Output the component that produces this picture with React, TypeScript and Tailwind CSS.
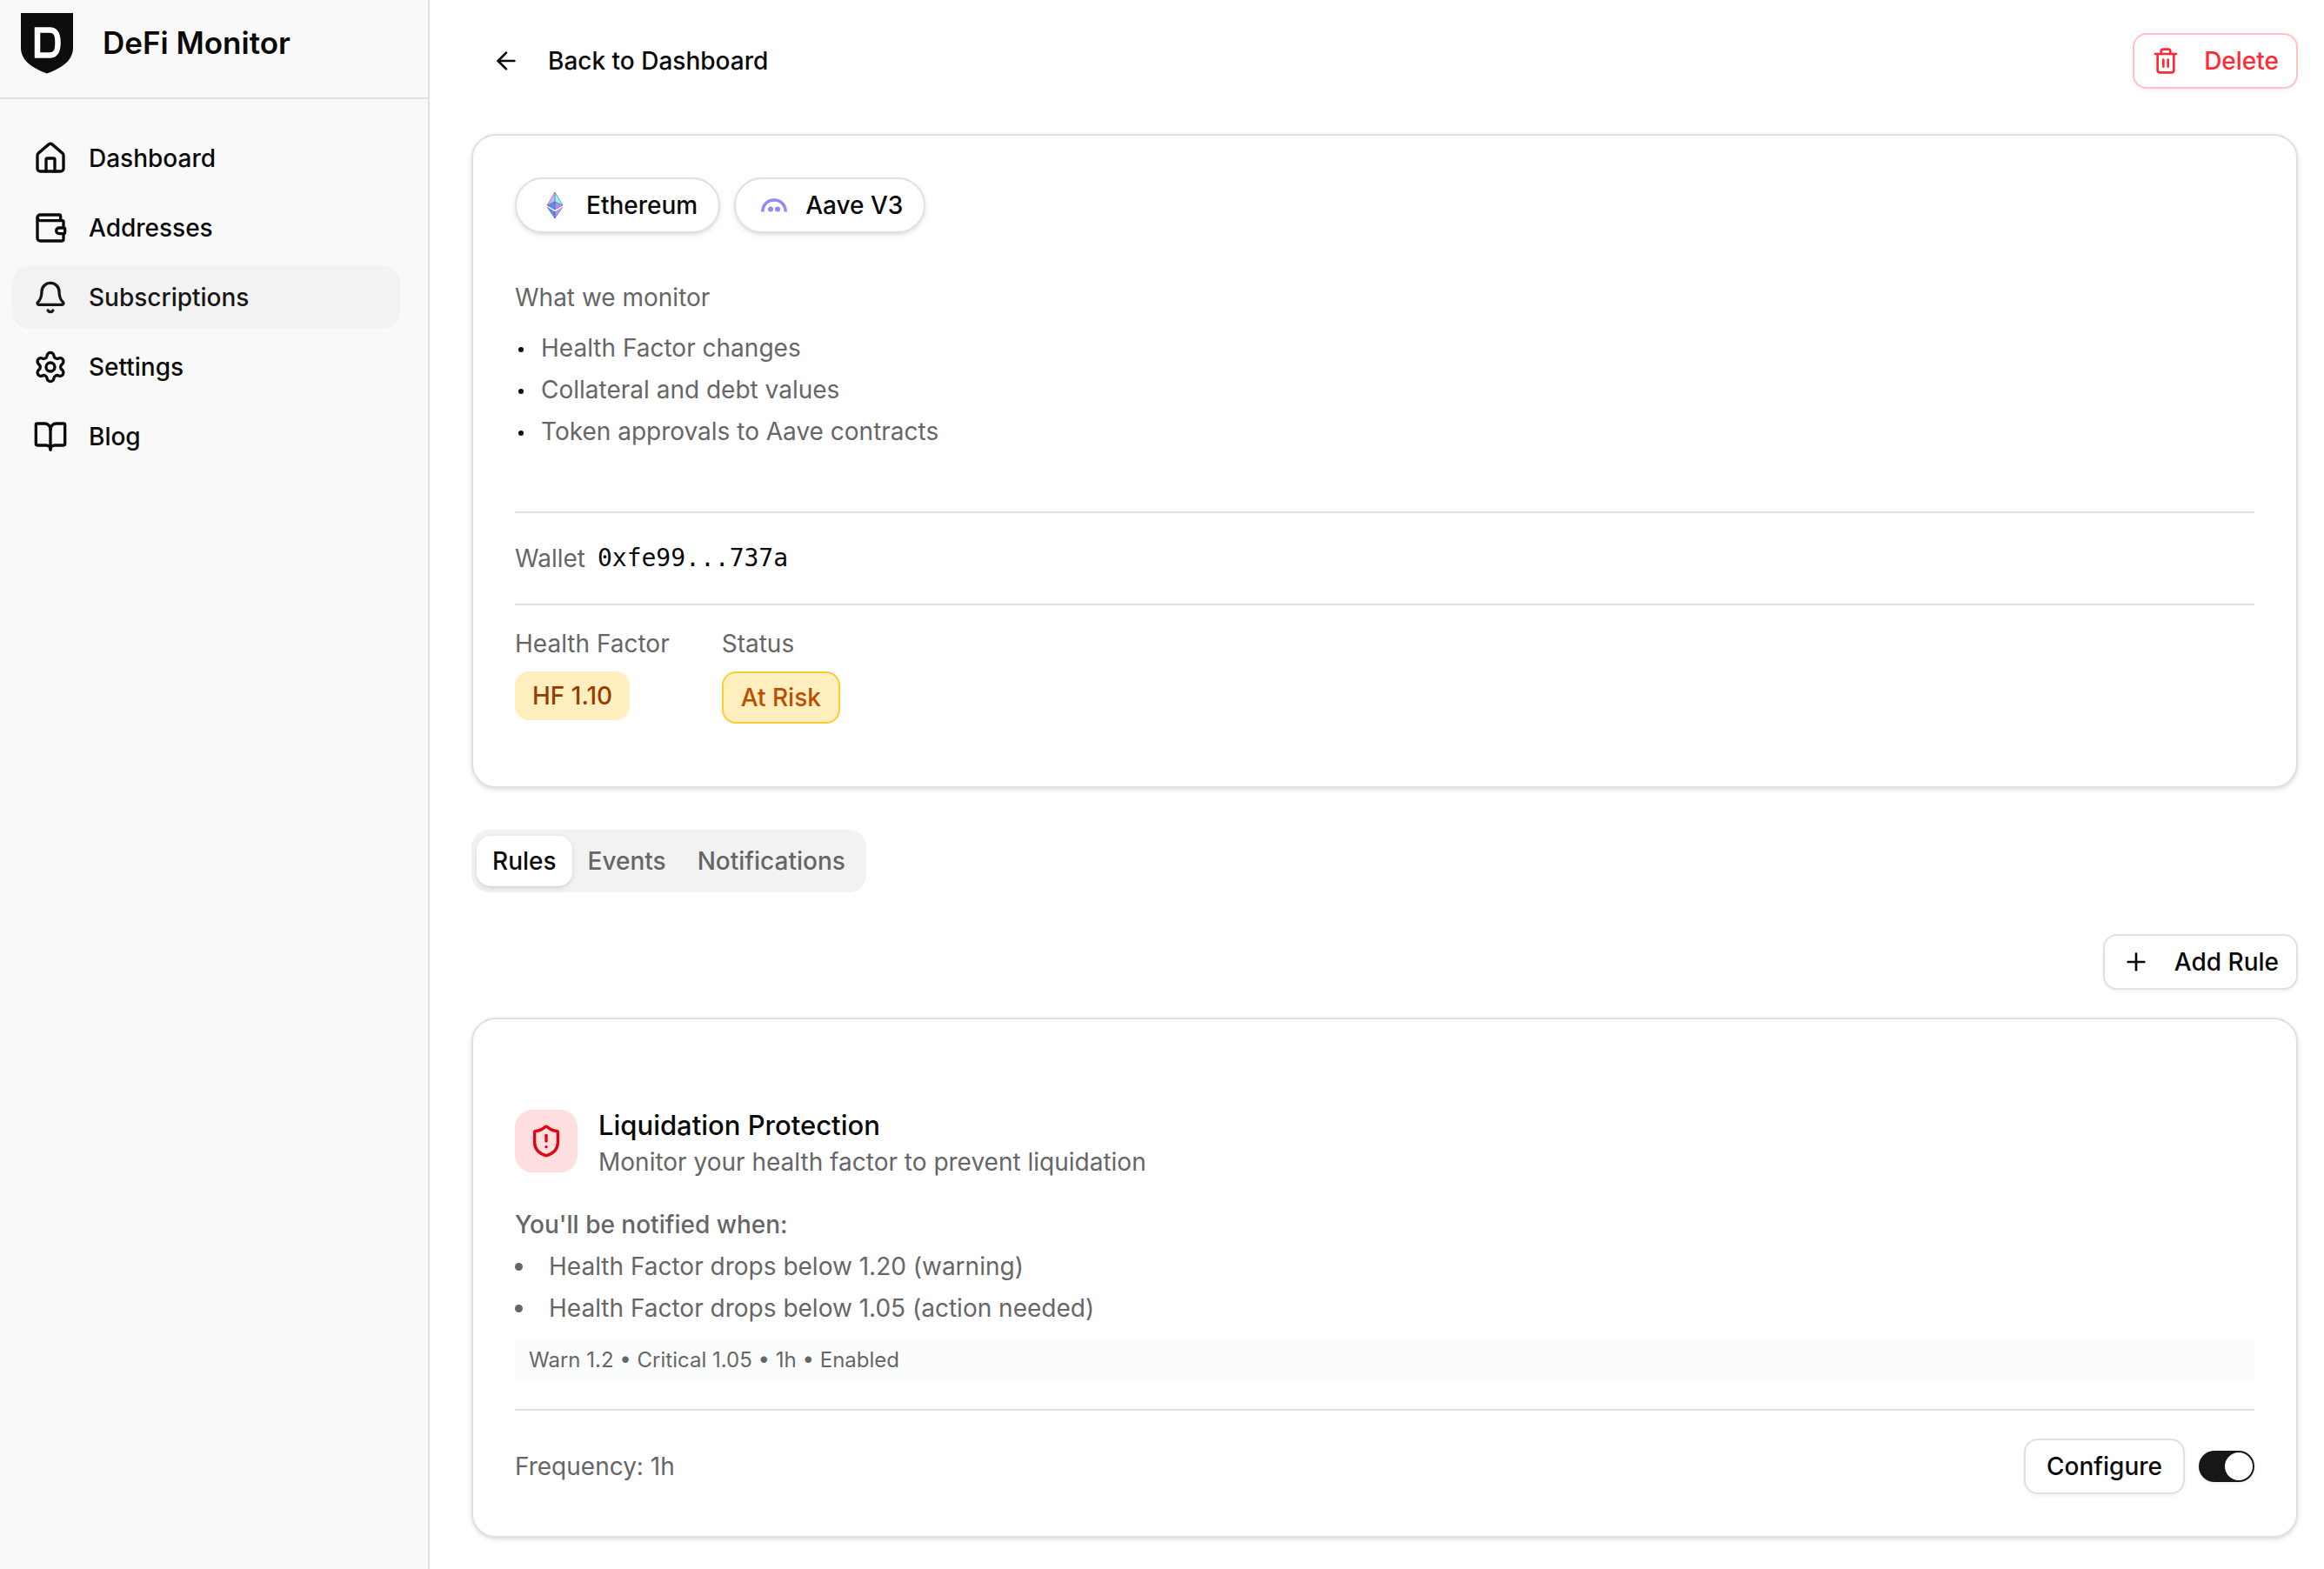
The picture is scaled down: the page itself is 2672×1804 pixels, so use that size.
import { useState } from 'react';
import type { ReactNode } from 'react';
import { ArrowLeft, Bell, BookOpen, House, Plus, Settings, ShieldAlert, Trash2, Wallet } from 'lucide-react';
import clsx from 'clsx';

const CARD = 'rounded-[28px] border-2 border-[#e0e0e0] bg-white px-12 shadow-[0_2px_6px_rgba(0,0,0,0.1),0_2px_4px_-2px_rgba(0,0,0,0.1)]';
const OUTLINE_BUTTON = 'flex h-16 items-center rounded-2xl border-2 bg-white font-medium shadow-[0_2px_4px_rgba(0,0,0,0.05)]';

const NAV = [
  { label: 'Dashboard', icon: House },
  { label: 'Addresses', icon: Wallet },
  { label: 'Subscriptions', icon: Bell },
  { label: 'Settings', icon: Settings },
  { label: 'Blog', icon: BookOpen },
];

const MONITORED = ['Health Factor changes', 'Collateral and debt values', 'Token approvals to Aave contracts'];

const CONDITIONS = ['Health Factor drops below 1.20 (warning)', 'Health Factor drops below 1.05 (action needed)'];

const TABS = ['Rules', 'Events', 'Notifications'];

function Logo() {
  return (
    <svg viewBox="0 0 60 70" className="h-[70px] w-[60px]" aria-hidden="true">
      <path d="M0 0h60v40c0 14-12 23-30 29.500C12 63 0 54 0 40Z" fill="#0d0d0d" />
      <path d="M19 19.500h14c7.500 0 9.500 5 9.500 14.500s-2 14.500-9.500 14.500H19Z" fill="none" stroke="#fff" strokeWidth="6.500" />
    </svg>
  );
}

function EthereumIcon() {
  return (
    <svg viewBox="0 0 40 40" className="size-10" aria-hidden="true">
      <path d="M20 5 11 20 20 16Z" fill="#c9b3f5" />
      <path d="M20 5 29 20 20 16Z" fill="#88fbee" />
      <path d="M20 16 11 20 20 25Z" fill="#5a8df5" />
      <path d="M20 16 29 20 20 25Z" fill="#b88ff0" />
      <path d="M11 22 20 27v8Z" fill="#5a8df5" />
      <path d="M29 22 20 27v8Z" fill="#c095f0" />
      <path
        d="M20 5 11 20 20 25l9-5ZM20 5v20M11 20 20 16l9 4M20 27v8M11 22l9 13 9-13"
        fill="none"
        stroke="#3d3f7d"
        strokeWidth="0.500"
      />
    </svg>
  );
}

function AaveIcon() {
  return (
    <svg viewBox="0 0 40 40" className="size-10" aria-hidden="true">
      <path d="M6.800 27.500C6.800 19.500 12.500 14 20 14s13.200 5.500 13.200 13.500" fill="none" stroke="#8f8bfa" strokeWidth="3.600" />
      <circle cx="16" cy="24.500" r="3" fill="#8f8bfa" />
      <circle cx="24" cy="24.500" r="3" fill="#8f8bfa" />
    </svg>
  );
}

function Pill({ icon, children }: { icon: ReactNode; children: ReactNode }) {
  return (
    <span className="flex h-16 items-center gap-4 rounded-full border-2 border-[#e0e0e0] px-6 font-medium shadow-[0_2px_6px_rgba(0,0,0,0.1),0_2px_4px_-2px_rgba(0,0,0,0.1)]">
      {icon}
      {children}
    </span>
  );
}

function Sidebar() {
  return (
    <aside className="w-[494px] shrink-0 border-r-2 border-[#e0e0e0] bg-[#f9f9f9]">
      <div className="flex h-[114px] items-start gap-[34px] border-b-2 border-[#e0e0e0] px-6 pt-[15px]">
        <Logo />
        <span className="pt-3 text-[35px] leading-[44px] font-semibold">DeFi Monitor</span>
      </div>
      <nav className="flex flex-col gap-2 py-8 pr-8 pl-[14px]">
        {NAV.map(({ label, icon: Icon }) => (
          <a
            key={label}
            href="#"
            className={clsx(
              'flex h-[72px] items-center gap-6 rounded-[20px] px-6 font-medium',
              label === 'Subscriptions' && 'bg-[#f2f2f2] text-[#171717]',
            )}
          >
            <Icon className="size-10" />
            {label}
          </a>
        ))}
      </nav>
    </aside>
  );
}

function PositionCard() {
  return (
    <section className={clsx(CARD, 'mt-[52px] pt-12 pb-[72px]')}>
      <div className="flex gap-4">
        <Pill icon={<EthereumIcon />}>Ethereum</Pill>
        <Pill icon={<AaveIcon />}>Aave V3</Pill>
      </div>

      <div className="mt-[54px] text-[#666]">
        <h2>What we monitor</h2>
        <ul className="mt-[18px] flex flex-col gap-2">
          {MONITORED.map((text) => (
            <li key={text} className="flex items-center pl-1">
              <span className="mt-1 mr-5 size-[6px] rounded-full bg-[#0a0a0a]" />
              {text}
            </li>
          ))}
        </ul>
      </div>

      {/* Wallet */}
      <div className="mt-[72px] flex h-[108px] items-center gap-[14px] border-y-2 border-[#e0e0e0]">
        <span className="text-[#666]">Wallet</span>
        <span className="font-['DejaVu_Sans_Mono',monospace]">0xfe99...737a</span>
      </div>

      {/* Current health */}
      <dl className="mt-6 flex gap-[60px]">
        <div className="flex flex-col items-start gap-3">
          <dt className="text-[#666]">Health Factor</dt>
          <dd className="rounded-2xl bg-[#ffefbf] px-5 py-2 font-medium text-[#973c00]">HF 1.10</dd>
        </div>
        <div className="flex flex-col items-start gap-3">
          <dt className="text-[#666]">Status</dt>
          <dd className="rounded-2xl border-2 border-[#ffcc2e] bg-[#ffefbf] px-5 py-2 font-medium text-[#bb4d00]">
            At Risk
          </dd>
        </div>
      </dl>
    </section>
  );
}

function RuleCard() {
  const [enabled, setEnabled] = useState(true);

  return (
    <section className={clsx(CARD, 'mt-8 pt-[104px] pb-12')}>
      <div className="flex items-start gap-6">
        <div className="flex size-[72px] items-center justify-center rounded-[20px] bg-[#ffdfdf] text-[#e7000b]">
          <ShieldAlert className="size-10" />
        </div>
        <div>
          <h3 className="text-[31px] leading-9 font-medium">Liquidation Protection</h3>
          <p className="mt-1 text-[#666]">Monitor your health factor to prevent liquidation</p>
        </div>
      </div>

      <div className="mt-8 text-[#666]">
        <p className="font-medium">You'll be notified when:</p>
        <ul className="mt-2 flex flex-col gap-2">
          {CONDITIONS.map((text) => (
            <li key={text} className="flex items-center">
              <span className="mr-[30px] size-[9px] rounded-full bg-[#666]" />
              {text}
            </li>
          ))}
        </ul>
        <p className="mt-4 rounded-lg bg-[#fbfdfc] px-4 py-2 text-2xl leading-8">
          Warn 1.2 • Critical 1.05 • 1h • Enabled
        </p>
      </div>

      <div className="mt-8 flex items-center justify-between border-t-2 border-[#e0e0e0] pt-8">
        <span className="text-[#666]">Frequency: 1h</span>
        <div className="flex items-center gap-4">
          <button type="button" className={clsx(OUTLINE_BUTTON, 'border-[#e0e0e0] px-6')}>
            Configure
          </button>
          <label className="flex h-9 w-16 items-center rounded-full bg-[#c4c4c4] p-[2px] shadow-[0_2px_4px_rgba(0,0,0,0.05)] has-checked:justify-end has-checked:bg-[#171717]">
            <input
              type="checkbox"
              role="switch"
              aria-label="Rule enabled"
              checked={enabled}
              onChange={(e) => setEnabled(e.target.checked)}
              className="size-8 appearance-none rounded-full bg-white"
            />
          </label>
        </div>
      </div>
    </section>
  );
}

export default function App() {
  const [tab, setTab] = useState('Rules');

  return (
    <div className="flex min-h-screen bg-white font-[Inter,sans-serif] text-[28px] leading-10 text-[#0a0a0a]">
      <Sidebar />

      <main className="min-w-0 flex-1 pt-[38px] pr-[30px] pb-9 pl-12">
        <div className="flex items-center justify-between">
          <button type="button" className="flex h-16 items-center gap-8 px-6 font-medium">
            <ArrowLeft className="size-8" />
            Back to Dashboard
          </button>
          <button type="button" className={clsx(OUTLINE_BUTTON, 'gap-7 border-[#ffc2c2] px-5 text-[#fb2c36]')}>
            <Trash2 className="size-8" />
            Delete
          </button>
        </div>

        <PositionCard />

        <div role="tablist" className="mt-12 flex h-[72px] w-fit items-center rounded-[20px] bg-[#f2f2f2] px-[6px]">
          {TABS.map((name) => (
            <button
              key={name}
              type="button"
              role="tab"
              aria-selected={tab === name}
              onClick={() => setTab(name)}
              className={clsx(
                'h-[58px] rounded-2xl px-[18px] font-medium',
                tab === name ? 'bg-white shadow-[0_2px_6px_rgba(0,0,0,0.1),0_2px_4px_-2px_rgba(0,0,0,0.1)]' : 'text-[#666]',
              )}
            >
              {name}
            </button>
          ))}
        </div>

        <div className="mt-12 flex justify-end">
          <button type="button" className={clsx(OUTLINE_BUTTON, 'gap-7 border-[#e0e0e0] px-5')}>
            <Plus className="size-8" />
            Add Rule
          </button>
        </div>

        <RuleCard />
      </main>
    </div>
  );
}
